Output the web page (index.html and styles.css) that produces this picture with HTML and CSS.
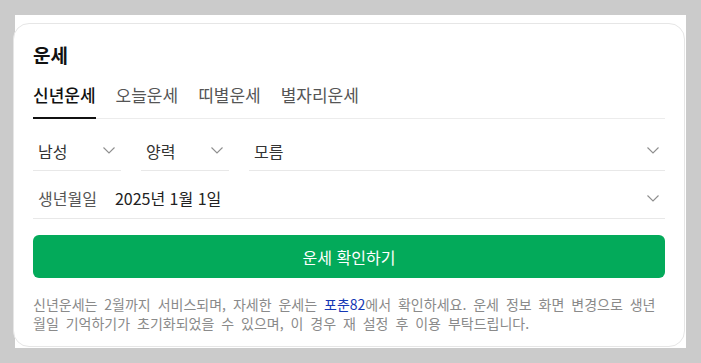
FILE: index.html
```html
<!DOCTYPE html>
<html lang="ko">
<head>
<meta charset="utf-8">
<link rel="stylesheet" href="styles.css">
</head>
<body>
<div class="page">
  <section class="card">
    <h2 class="title">운세</h2>
    <nav class="tabs">
      <a class="tab active">신년운세</a>
      <a class="tab">오늘운세</a>
      <a class="tab">띠별운세</a>
      <a class="tab">별자리운세</a>
    </nav>
    <div class="selects">
      <div class="select s-small"><span>남성</span><svg class="chev" width="12" height="7" viewBox="0 0 12 7"><polyline points="0.5,0.5 6,6 11.5,0.5"/></svg></div>
      <div class="select s-small"><span>양력</span><svg class="chev" width="12" height="7" viewBox="0 0 12 7"><polyline points="0.5,0.5 6,6 11.5,0.5"/></svg></div>
      <div class="select s-grow"><span>모름</span><svg class="chev" width="12" height="7" viewBox="0 0 12 7"><polyline points="0.5,0.5 6,6 11.5,0.5"/></svg></div>
    </div>
    <div class="select birth">
      <span class="label">생년월일</span>
      <span class="date">2025년 1월 1일</span>
      <svg class="chev" width="12" height="7" viewBox="0 0 12 7"><polyline points="0.5,0.5 6,6 11.5,0.5"/></svg>
    </div>
    <button class="btn">운세 확인하기</button>
    <p class="notice">신년운세는 2월까지 서비스되며, 자세한 운세는 <a class="link">포춘82</a>에서 확인하세요. 운세 정보 화면 변경으로 생년<br>월일 기억하기가 초기화되었을 수 있으며, 이 경우 재 설정 후 이용 부탁드립니다.</p>
  </section>
</div>
</body>
</html>
```
FILE: styles.css
```css
* { box-sizing: border-box; }
html, body { margin: 0; padding: 0; }
body {
  background: #cbcbcb;
  font-family: "Noto Sans CJK KR", "Noto Sans", sans-serif;
  height: 363px;
  overflow: hidden;
}
.page {
  margin: 15px 0 0 15px;
  width: 671px;
  height: 333px;
  background: #fff;
  padding-top: 8px;
}
.card {
  margin-left: -2px;
  width: 672px;
  height: 324px;
  background: #fff;
  border: 1px solid #e6e6e6;
  border-radius: 16px;
  padding: 18px 19px 0 19px;
}
.title {
  margin: 0;
  font-size: 19px;
  font-weight: 700;
  line-height: 26px;
  color: #111;
}
.tabs {
  margin-top: 13px;
  display: flex;
  gap: 20px;
  border-bottom: 1px solid #ececec;
}
.tab {
  font-size: 17px;
  line-height: 28px;
  color: #555;
  padding-bottom: 8px;
  border-bottom: 2px solid transparent;
  margin-bottom: -1px;
}
.tab.active {
  color: #111;
  font-weight: 500;
  border-bottom-color: #111;
}
.selects {
  display: flex;
  gap: 20px;
  padding-top: 12px;
}
.select {
  display: flex;
  align-items: center;
  height: 40px;
  border-bottom: 1px solid #e8e8e8;
  padding: 0 6px 0 5px;
  font-size: 16px;
  color: #333;
}
.select span { flex: 1; }
.s-small { width: 88px; }
.s-grow { flex: 1; }
.chev {
  flex: none;
  fill: none;
  stroke: #8e8e8e;
  stroke-width: 1.1;
}
.birth {
  margin-top: 7px;
  height: 41px;
  padding-left: 5px;
}
.birth .label { flex: none; color: #555; margin-right: 18px; }
.birth .date { color: #222; }
.btn {
  display: block;
  width: 100%;
  margin-top: 16px;
  height: 43px;
  border: 0;
  border-radius: 6px;
  background: #03aa5a;
  color: #fff;
  font-family: inherit;
  font-size: 16px;
  font-weight: 400;
}
.notice {
  margin: 17px 0 0 0;
  font-size: 14px;
  line-height: 19px;
  color: #8a8a8a;
  white-space: nowrap;
  word-spacing: 3px;
}
.link { color: #1537b5; }
```
